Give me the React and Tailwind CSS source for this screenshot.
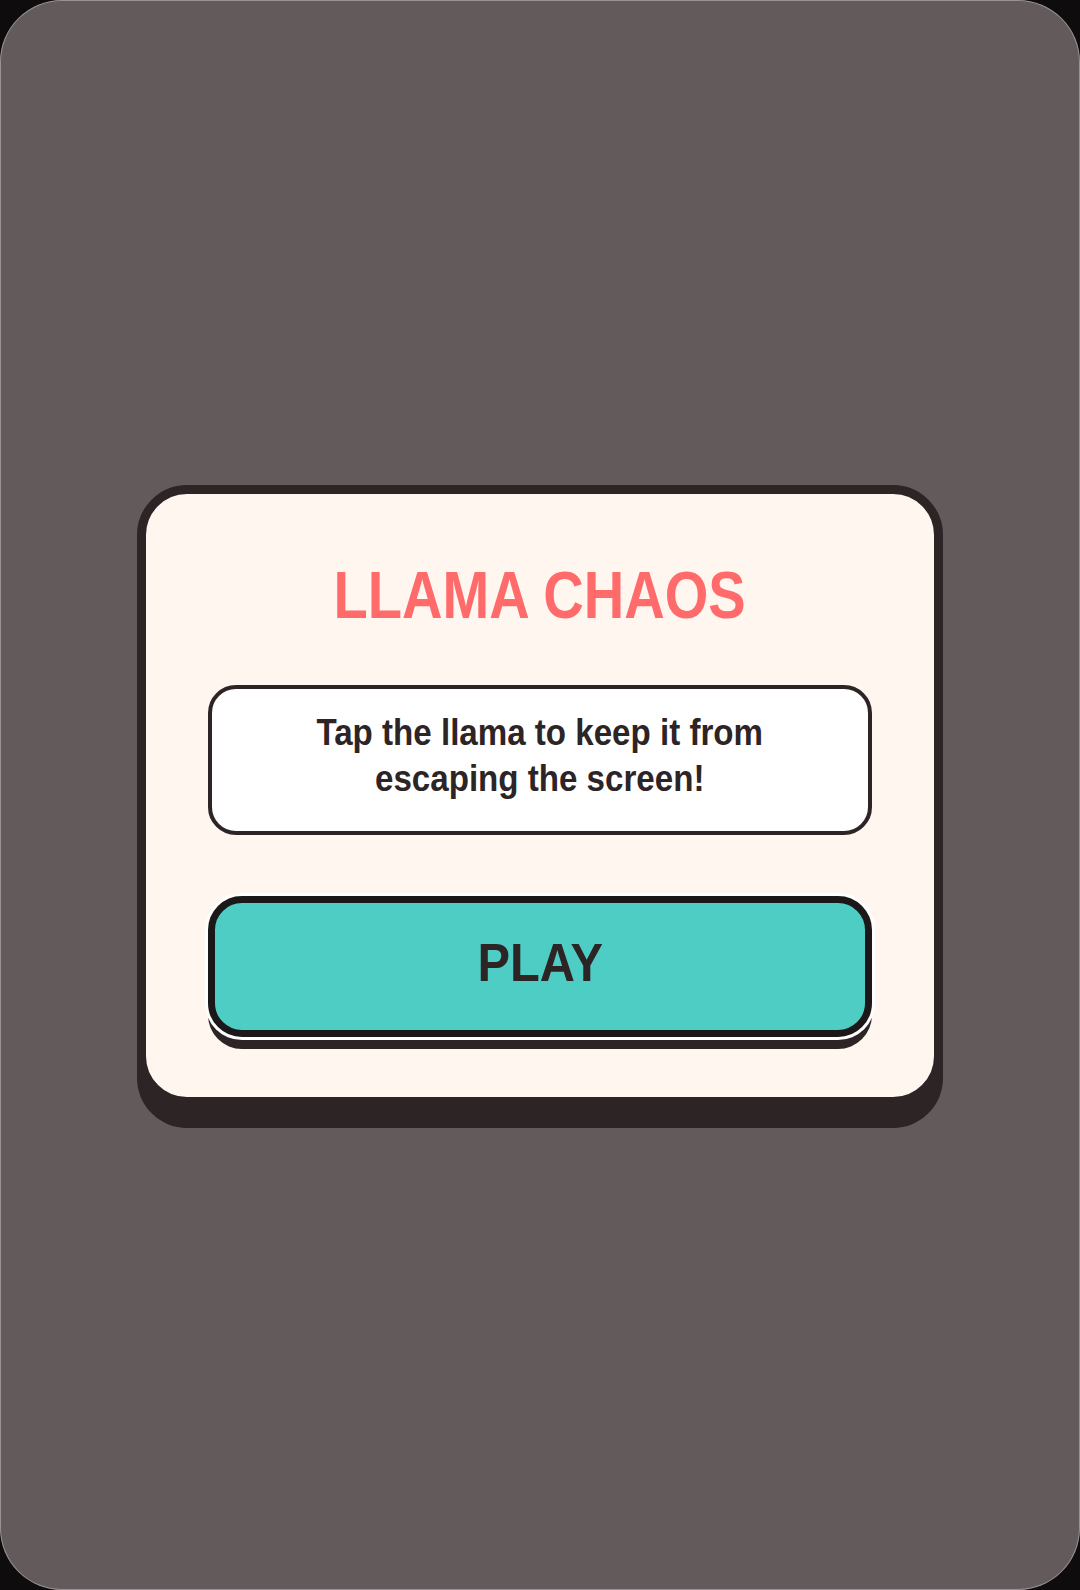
export default function App() {
  return (
    <div className="w-[1080px] h-[1590px] bg-[#0e0c0d]">
      <div className="h-full rounded-[62px] bg-[#625a5b] shadow-[inset_0_0_0_1px_rgba(255,255,255,0.35)] flex items-center justify-center">
        {/* card */}
        <div className="w-[806px] rounded-[50px] border-[9px] border-[#2d2426] bg-[#fff7ef] shadow-[0_22px_0_#2d2426] px-[62px] pt-[62px] pb-[60px]">
          <h1 className="text-center text-[66px] leading-[79px] font-bold text-[#ff6b6b] font-['Liberation_Sans',sans-serif]">
            <span className="inline-block scale-x-[0.85]">LLAMA CHAOS</span>
          </h1>

          <div className="mt-[50px] h-[150px] pb-[8px] rounded-[28px] border-4 border-[#2d2426] bg-white flex items-center justify-center">
            <p className="text-center text-[36px] leading-[46px] font-bold text-[#2d2426] font-['Liberation_Sans',sans-serif] scale-x-[0.92]">
              Tap the llama to keep it from
              <br />
              escaping the screen!
            </p>
          </div>

          <button className="mt-[61px] w-full h-[141px] pb-[6px] rounded-[34px] border-[7px] border-[#1c1718] bg-[#4ecdc4] shadow-[0_0_0_3px_#ffffff,0_12px_0_#2d2426] flex items-center justify-center">
            <span className="inline-block scale-x-[0.92] text-[53px] font-bold text-[#2d2426] font-['Liberation_Sans',sans-serif]">
              PLAY
            </span>
          </button>
        </div>
      </div>
    </div>
  )
}
